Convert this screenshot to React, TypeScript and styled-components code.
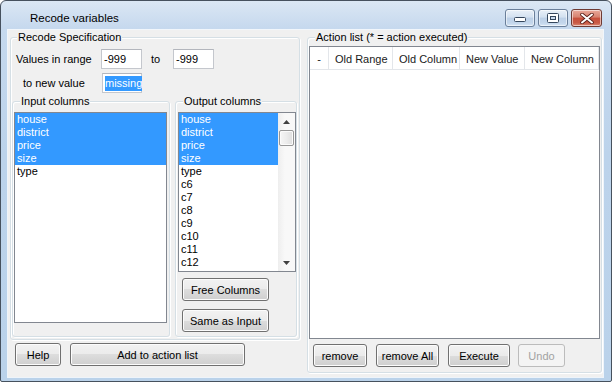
import React from 'react';
import styled, { createGlobalStyle } from 'styled-components';

const Global = createGlobalStyle`
  html, body { margin: 0; padding: 0; background: #ffffff; }
  body { font-family: "Liberation Sans", Arial, sans-serif; font-size: 11px; color: #000; }
  * { box-sizing: border-box; }
`;

const FONT = `"Liberation Sans", Arial, sans-serif`;

const Frame = styled.div`
  width: 612px;
  height: 382px;
  border: 1px solid #46515e;
  border-radius: 6px 6px 2px 2px;
  background: linear-gradient(180deg, #dbe7f4 0%, #c6d9ee 7%, #bcd3eb 40%, #bad2ea 100%);
  display: flex;
  flex-direction: column;
  overflow: hidden;
`;

const TitleBar = styled.div`
  height: 29px;
  flex-shrink: 0;
  display: flex;
  align-items: flex-start;
`;

const Title = styled.div`
  margin: 10px 0 0 29px;
  font: 11.5px ${FONT};
  line-height: 14px;
  color: #000;
`;

const CaptionButtons = styled.div`
  margin: 8px 9px 0 auto;
  display: flex;
  gap: 3px;
`;

const CaptionButton = styled.div<{ $close?: boolean; $w: number }>`
  width: ${p => p.$w}px;
  height: 18px;
  border: 1px solid ${p => (p.$close ? '#6e3a33' : '#6a7f9a')};
  border-radius: 3px;
  background: ${p =>
    p.$close
      ? 'linear-gradient(180deg, #e9a99b 0%, #d7826f 45%, #c7503c 50%, #c95a45 80%, #dc8a74 100%)'
      : 'linear-gradient(180deg, #e9f0f8 0%, #d3e1f0 45%, #bdd0e7 50%, #c3d6eb 80%, #d6e5f4 100%)'};
  box-shadow: inset 0 0 0 1px rgba(255, 255, 255, 0.55);
  display: flex;
  align-items: center;
  justify-content: center;
`;

const Body = styled.div`
  flex: 1;
  display: flex;
  padding: 0 8px 4px 7px;
`;

const Client = styled.div`
  width: 595px;
  height: 347px;
  background: #f0f0f0;
  outline: 1px solid rgba(255, 255, 255, 0.75);
  display: flex;
  align-items: flex-start;
  padding: 7px 0 0 2px;
`;

const LeftCol = styled.div`
  width: 290px;
  display: flex;
  flex-direction: column;
`;

const Group = styled.div<{ $w: number; $h: number }>`
  position: relative;
  width: ${p => p.$w}px;
  height: ${p => p.$h}px;
  flex-shrink: 0;
  border: 1px solid #d5dfe5;
  border-radius: 3px;
  box-shadow: inset 1px 1px 0 #ffffff, 1px 1px 0 #ffffff;
  display: flex;
  flex-direction: column;
  align-items: flex-start;
`;

const Legend = styled.div<{ $left: number }>`
  position: absolute;
  top: -7px;
  left: ${p => p.$left}px;
  padding: 0 1px;
  background: #f0f0f0;
  font: 11px ${FONT};
  line-height: 13px;
  color: #000;
  white-space: nowrap;
`;

const FieldRow = styled.div<{ $mt: number }>`
  display: flex;
  align-items: center;
  height: 20px;
  margin-top: ${p => p.$mt}px;
`;

const FieldLabel = styled.div<{ $w: number; $pl: number }>`
  width: ${p => p.$w}px;
  padding-left: ${p => p.$pl}px;
  font: 11px ${FONT};
  white-space: nowrap;
`;

const TextBox = styled.div<{ $w: number }>`
  width: ${p => p.$w}px;
  height: 20px;
  border: 1px solid #c4c7cd;
  border-top-color: #b3b6bd;
  background: #ffffff;
  padding: 0 2px;
  display: flex;
  align-items: center;
  font: 11px ${FONT};
  white-space: nowrap;
`;

const Selected = styled.span`
  background: #3399ff;
  color: #ffffff;
  line-height: 15px;
`;

const Caret = styled.span`
  display: inline-block;
  width: 2px;
  height: 15px;
  background: #d86a12;
`;

const InnerRow = styled.div`
  display: flex;
  gap: 5px;
  margin: 8px 0 0 1px;
`;

const ListBox = styled.div<{ $w: number; $h: number; $ml: number }>`
  width: ${p => p.$w}px;
  height: ${p => p.$h}px;
  margin: 10px 0 0 ${p => p.$ml}px;
  border: 1px solid #828790;
  background: #ffffff;
  display: flex;
  overflow: hidden;
  flex-shrink: 0;
`;

const Items = styled.div`
  flex: 1;
  min-width: 0;
  display: flex;
  flex-direction: column;
`;

const Item = styled.div<{ $sel?: boolean }>`
  height: 13px;
  line-height: 13px;
  padding-left: 2px;
  font: 11px ${FONT};
  line-height: 13px;
  white-space: nowrap;
  background: ${p => (p.$sel ? '#3399ff' : 'transparent')};
  color: ${p => (p.$sel ? '#ffffff' : '#000000')};
`;

const ScrollBar = styled.div`
  width: 17px;
  display: flex;
  flex-direction: column;
  background: linear-gradient(90deg, #eeeeee 0%, #f8f8f8 40%, #f8f8f8 100%);
`;

const ScrollArrow = styled.div`
  height: 17px;
  display: flex;
  align-items: center;
  justify-content: center;
`;

const Thumb = styled.div`
  height: 16px;
  margin: 0 1px;
  border: 1px solid #979797;
  border-radius: 2px;
  background: linear-gradient(90deg, #f6f6f6 0%, #ececec 50%, #dedede 100%);
  box-shadow: inset 0 0 0 1px #fbfbfb;
`;

const Spacer = styled.div`
  flex: 1;
`;

const Button = styled.button<{ $w: number; $mt?: number; $ml?: number }>`
  width: ${p => p.$w}px;
  height: 23px;
  flex-shrink: 0;
  margin: ${p => p.$mt ?? 0}px 0 0 ${p => p.$ml ?? 0}px;
  padding: 0;
  border: 1px solid #707070;
  border-radius: 3px;
  background: linear-gradient(180deg, #f2f2f2 0%, #ebebeb 50%, #dddddd 50%, #cfcfcf 100%);
  box-shadow: inset 0 0 0 1px #fcfcfc;
  font: 11px ${FONT};
  color: #000000;
  cursor: default;
  &:disabled {
    border-color: #bcbcbc;
    background: #f4f4f4;
    box-shadow: none;
    color: #a2a2a2;
  }
`;

const ButtonRow = styled.div<{ $mt: number; $pl: number }>`
  display: flex;
  margin-top: ${p => p.$mt}px;
  padding-left: ${p => p.$pl}px;
`;

const ListView = styled.div`
  width: 291px;
  height: 293px;
  margin: 8px 0 0 1px;
  border: 1px solid #828790;
  background: #ffffff;
  flex-shrink: 0;
`;

const Header = styled.div`
  height: 23px;
  display: flex;
  border-bottom: 1px solid #e3e6ea;
`;

const HeaderCell = styled.div<{ $w: number; $center?: boolean }>`
  width: ${p => p.$w}px;
  flex-shrink: 0;
  border-right: 1px solid #e3e6ea;
  display: flex;
  align-items: center;
  justify-content: ${p => (p.$center ? 'center' : 'flex-start')};
  padding: 2px 0 0 ${p => (p.$center ? 0 : 6)}px;
  font: 11px ${FONT};
  color: #1a1a1a;
  white-space: nowrap;
`;

const UpTri = () => (
  <svg width="7" height="4" viewBox="0 0 7 4">
    <polygon points="0,4 3.5,0 7,4" fill="#404040" />
  </svg>
);
const DownTri = () => (
  <svg width="7" height="4" viewBox="0 0 7 4">
    <polygon points="0,0 7,0 3.5,4" fill="#404040" />
  </svg>
);

const MinGlyph = () => (
  <svg width="14" height="10" viewBox="0 0 14 10">
    <rect x="1.5" y="4.5" width="11" height="4" rx="1" fill="#ffffff" stroke="#34465c" />
  </svg>
);
const MaxGlyph = () => (
  <svg width="12" height="10" viewBox="0 0 12 10">
    <rect x="0.5" y="0.5" width="11" height="9" rx="1" fill="#ffffff" stroke="#34465c" />
    <rect x="3.5" y="3.5" width="5" height="3" fill="#c9d9ec" stroke="#34465c" />
  </svg>
);
const CloseGlyph = () => (
  <svg width="14" height="11" viewBox="0 0 14 11">
    <path d="M2,1.5 L12,9.5 M12,1.5 L2,9.5" stroke="#5a1f18" strokeWidth="3.6" strokeLinecap="round" />
    <path d="M2,1.5 L12,9.5 M12,1.5 L2,9.5" stroke="#ffffff" strokeWidth="2" strokeLinecap="round" />
  </svg>
);

const inputCols = ['house', 'district', 'price', 'size', 'type'];
const outputCols = ['house', 'district', 'price', 'size', 'type', 'c6', 'c7', 'c8', 'c9', 'c10', 'c11', 'c12'];
const selectedCount = 4;

const columns: { label: string; w: number; center?: boolean }[] = [
  { label: '-', w: 19, center: true },
  { label: 'Old Range', w: 64 },
  { label: 'Old Column', w: 67 },
  { label: 'New Value', w: 65 },
  { label: 'New Column', w: 74 },
];

export default function App() {
  return (
    <>
      <Global />
      <Frame>
        <TitleBar>
          <Title>Recode variables</Title>
          <CaptionButtons>
            <CaptionButton $w={30}>
              <MinGlyph />
            </CaptionButton>
            <CaptionButton $w={30}>
              <MaxGlyph />
            </CaptionButton>
            <CaptionButton $w={31} $close>
              <CloseGlyph />
            </CaptionButton>
          </CaptionButtons>
        </TitleBar>
        <Body>
          <Client>
            <LeftCol>
              <Group $w={290} $h={303}>
                <Legend $left={6}>Recode Specification</Legend>
                <FieldRow $mt={11}>
                  <FieldLabel $w={90} $pl={5}>Values in range</FieldLabel>
                  <TextBox $w={41}>-999</TextBox>
                  <FieldLabel $w={31} $pl={9}>to</FieldLabel>
                  <TextBox $w={41}>-999</TextBox>
                </FieldRow>
                <FieldRow $mt={4}>
                  <FieldLabel $w={91} $pl={12}>to new value</FieldLabel>
                  <TextBox $w={40}>
                    <Selected>missing</Selected>
                    <Caret />
                  </TextBox>
                </FieldRow>
                <InnerRow>
                  <Group $w={158} $h={236}>
                    <Legend $left={7}>Input columns</Legend>
                    <ListBox $w={153} $h={211} $ml={1}>
                      <Items>
                        {inputCols.map((c, i) => (
                          <Item key={c} $sel={i < selectedCount}>
                            {c}
                          </Item>
                        ))}
                      </Items>
                    </ListBox>
                  </Group>
                  <Group $w={122} $h={236}>
                    <Legend $left={7}>Output columns</Legend>
                    <ListBox $w={118} $h={160} $ml={2}>
                      <Items>
                        {outputCols.map((c, i) => (
                          <Item key={c} $sel={i < selectedCount}>
                            {c}
                          </Item>
                        ))}
                      </Items>
                      <ScrollBar>
                        <ScrollArrow>
                          <UpTri />
                        </ScrollArrow>
                        <Thumb />
                        <Spacer />
                        <ScrollArrow>
                          <DownTri />
                        </ScrollArrow>
                      </ScrollBar>
                    </ListBox>
                    <Button $w={87} $mt={6} $ml={6}>
                      Free Columns
                    </Button>
                    <Button $w={87} $mt={8} $ml={6}>
                      Same as Input
                    </Button>
                  </Group>
                </InnerRow>
              </Group>
              <ButtonRow $mt={3} $pl={5}>
                <Button $w={46}>Help</Button>
                <Button $w={175} $ml={9}>
                  Add to action list
                </Button>
              </ButtonRow>
            </LeftCol>
            <Group $w={295} $h={336} style={{ marginLeft: 7 }}>
              <Legend $left={7}>Action list (* = action executed)</Legend>
              <ListView>
                <Header>
                  {columns.map(c => (
                    <HeaderCell key={c.label} $w={c.w} $center={c.center}>
                      {c.label}
                    </HeaderCell>
                  ))}
                </Header>
              </ListView>
              <ButtonRow $mt={5} $pl={5}>
                <Button $w={54}>remove</Button>
                <Button $w={63} $ml={9}>
                  remove All
                </Button>
                <Button $w={62} $ml={9}>
                  Execute
                </Button>
                <Button $w={47} $ml={8} disabled>
                  Undo
                </Button>
              </ButtonRow>
            </Group>
          </Client>
        </Body>
      </Frame>
    </>
  );
}
